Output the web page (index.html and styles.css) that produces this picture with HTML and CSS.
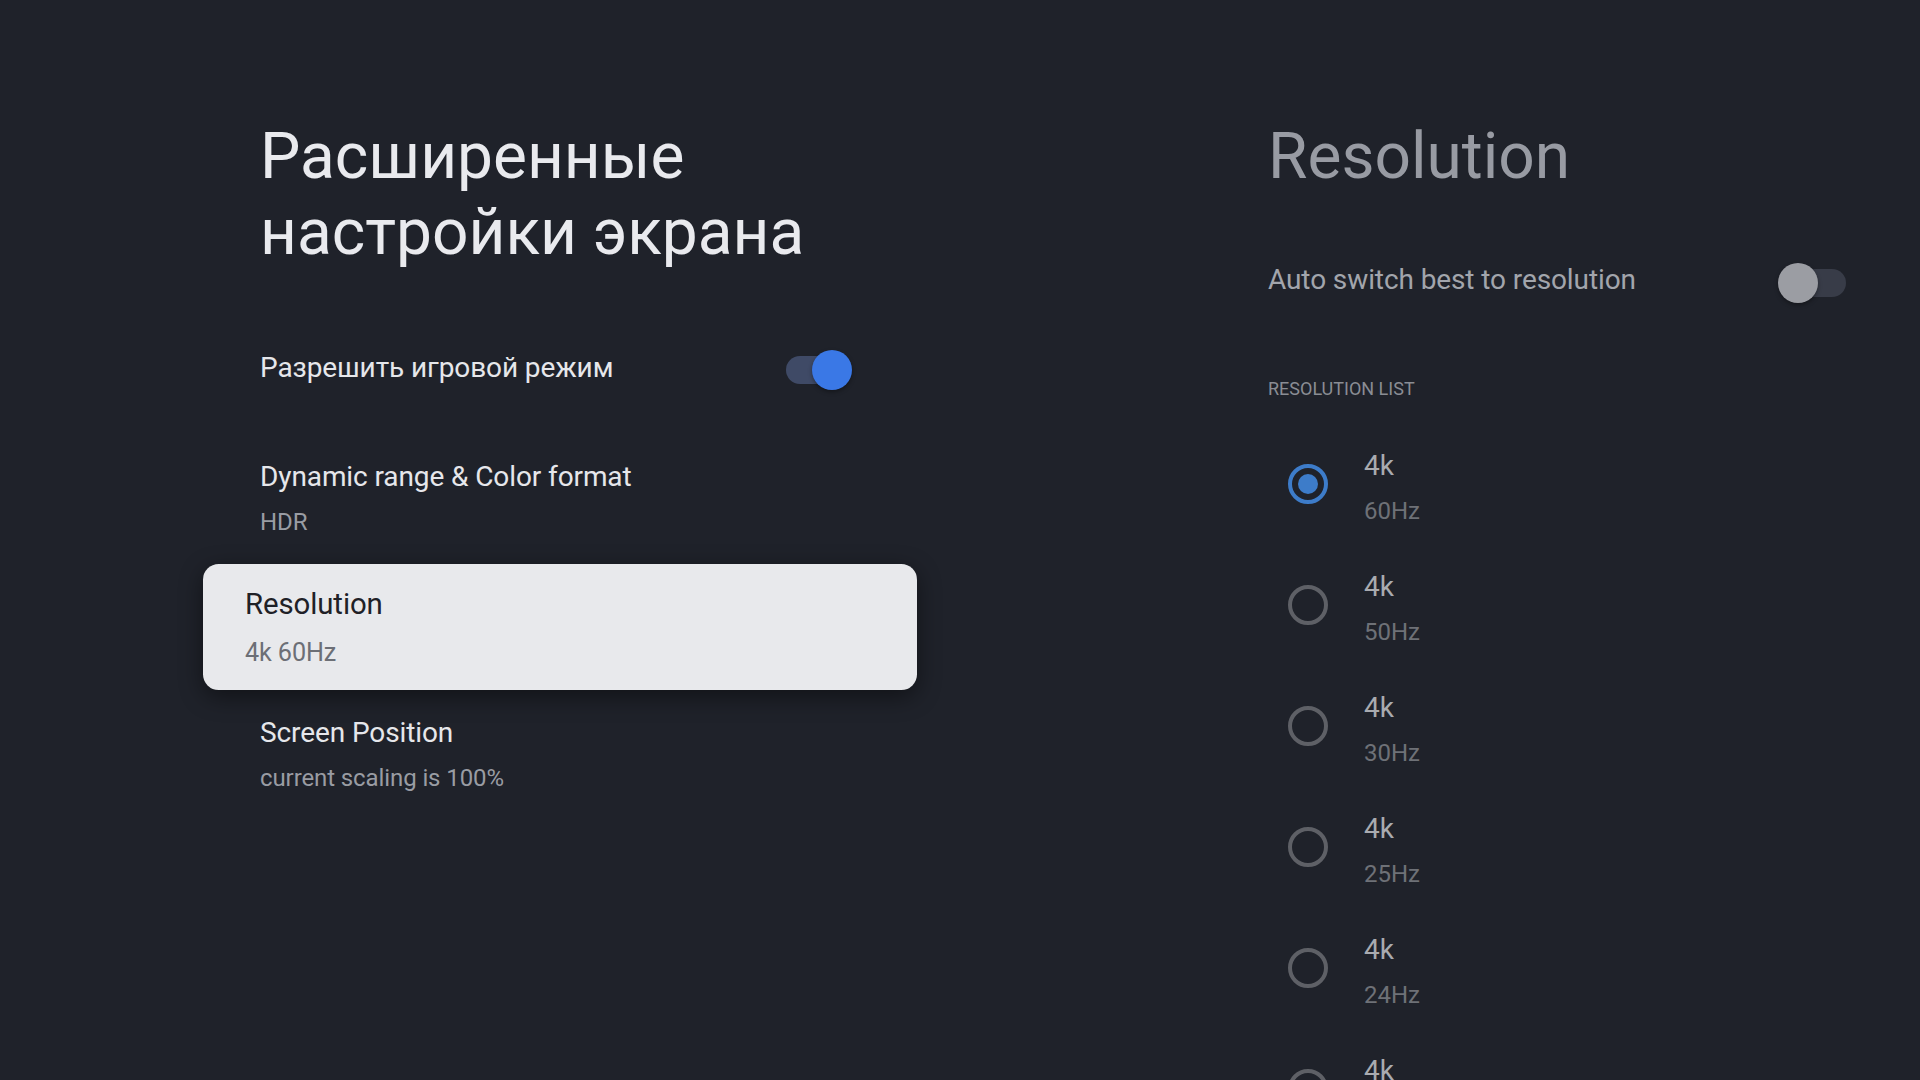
FILE: index.html
```html
<!DOCTYPE html>
<html lang="ru">
<head>
<meta charset="utf-8">
<title>Расширенные настройки экрана</title>
<link rel="stylesheet" href="styles.css">
</head>
<body>
<div class="screen">
  <section class="left">
    <h1 class="title">Расширенные<br>настройки экрана</h1>
    <ul class="prefs">
      <li class="pref pref-switch">
        <span class="pref-title">Разрешить игровой режим</span>
        <span class="switch on"><span class="switch-track"></span><span class="switch-knob"></span></span>
      </li>
      <li class="pref">
        <span class="pref-title">Dynamic range &amp; Color format</span>
        <span class="pref-sub">HDR</span>
      </li>
      <li class="pref focused">
        <span class="pref-title">Resolution</span>
        <span class="pref-sub">4k 60Hz</span>
      </li>
      <li class="pref">
        <span class="pref-title">Screen Position</span>
        <span class="pref-sub">current scaling is 100%</span>
      </li>
    </ul>
  </section>
  <section class="right">
    <h2 class="rtitle">Resolution</h2>
    <div class="auto-row">
      <span class="auto-text">Auto switch best to resolution</span>
      <span class="switch off"><span class="switch-track"></span><span class="switch-knob"></span></span>
    </div>
    <div class="section-label">RESOLUTION LIST</div>
    <ul class="radio-list">
      <li class="radio-item"><span class="radio checked"></span><span class="radio-text"><span class="r-title">4k</span><span class="r-sub">60Hz</span></span></li>
      <li class="radio-item"><span class="radio"></span><span class="radio-text"><span class="r-title">4k</span><span class="r-sub">50Hz</span></span></li>
      <li class="radio-item"><span class="radio"></span><span class="radio-text"><span class="r-title">4k</span><span class="r-sub">30Hz</span></span></li>
      <li class="radio-item"><span class="radio"></span><span class="radio-text"><span class="r-title">4k</span><span class="r-sub">25Hz</span></span></li>
      <li class="radio-item"><span class="radio"></span><span class="radio-text"><span class="r-title">4k</span><span class="r-sub">24Hz</span></span></li>
      <li class="radio-item"><span class="radio"></span><span class="radio-text"><span class="r-title">4k</span><span class="r-sub">23Hz</span></span></li>
    </ul>
  </section>
</div>
</body>
</html>
```
FILE: styles.css
```css
* { box-sizing: border-box; }
html, body { margin: 0; padding: 0; }
body {
  width: 1920px;
  height: 1080px;
  overflow: hidden;
  background: #1f222a;
  font-family: Roboto, "Noto Sans", sans-serif;
}
.screen {
  display: flex;
  padding-top: 119px;
  height: 1080px;
}
.left {
  margin-left: 220px;
  width: 680px;
  flex: none;
}
.title {
  margin: 0;
  padding-left: 40px;
  font-size: 64px;
  line-height: 76px;
  font-weight: 400;
  color: #e9eaee;
}
.prefs {
  list-style: none;
  margin: 35px 0 0;
  padding: 0;
  display: flex;
  flex-direction: column;
  gap: 8px;
}
.pref {
  height: 120px;
  padding: 0 40px;
  display: flex;
  flex-direction: column;
  justify-content: center;
  border-radius: 15px;
}
.pref-switch {
  height: 124px;
  flex-direction: row;
  align-items: center;
  justify-content: space-between;
  padding-right: 48px;
}
.pref-title {
  font-size: 28px;
  line-height: 36px;
  letter-spacing: -0.1px;
  color: #e6e7eb;
}
.pref-sub {
  font-size: 24px;
  line-height: 32px;
  letter-spacing: -0.1px;
  margin-top: 11px;
  color: #999ca3;
}
.pref.focused {
  background: #e8e9ec;
  transform: translateY(1px) scale(1.05);
  box-shadow: 0 6px 22px rgba(0, 0, 0, 0.45);
}
.pref.focused .pref-title { color: #1f2127; }
.pref.focused .pref-sub { color: #6c6f76; }

.switch {
  position: relative;
  width: 68px;
  height: 40px;
  flex: none;
  margin-top: 4px;
}
.switch-track {
  position: absolute;
  left: 2px;
  right: 2px;
  top: 6px;
  height: 28px;
  border-radius: 14px;
  background: #3f4a66;
}
.switch-knob {
  position: absolute;
  top: 0;
  right: 0;
  width: 40px;
  height: 40px;
  border-radius: 50%;
  background: #3a78e6;
  box-shadow: 0 2px 4px rgba(0, 0, 0, 0.35);
}
.switch.off { margin-top: 6px; }
.switch.off .switch-track { background: #383c48; left: 4px; right: 0; }
.switch.off .switch-knob { right: auto; left: 0; background: #9b9da3; }

.right {
  margin-left: 368px;
  width: 578px;
  flex: none;
}
.rtitle {
  margin: 0;
  font-size: 64px;
  line-height: 76px;
  font-weight: 400;
  color: #989ba3;
}
.auto-row {
  margin-top: 45px;
  height: 80px;
  display: flex;
  align-items: center;
  justify-content: space-between;
}
.auto-text {
  font-size: 28px;
  line-height: 36px;
  letter-spacing: -0.1px;
  color: #a2a5ac;
}
.section-label {
  margin-top: 57px;
  font-size: 18px;
  line-height: 24px;
  color: #8a8d94;
}
.radio-list {
  list-style: none;
  margin: 22px 0 0;
  padding: 0;
}
.radio-item {
  height: 121px;
  padding-left: 20px;
  display: flex;
  align-items: center;
  gap: 36px;
}
.radio {
  width: 40px;
  height: 40px;
  border: 4px solid #5e6066;
  border-radius: 50%;
  flex: none;
  display: flex;
  align-items: center;
  justify-content: center;
}
.radio.checked { border-color: #3d7cc9; }
.radio.checked::after {
  content: "";
  width: 20px;
  height: 20px;
  border-radius: 50%;
  background: #3d7cc9;
}
.radio-text {
  display: flex;
  flex-direction: column;
  padding-top: 8px;
}
.r-title {
  font-size: 28px;
  line-height: 36px;
  color: #a9abb0;
}
.r-sub {
  font-size: 24px;
  line-height: 32px;
  margin-top: 11px;
  color: #6e7177;
}
```
